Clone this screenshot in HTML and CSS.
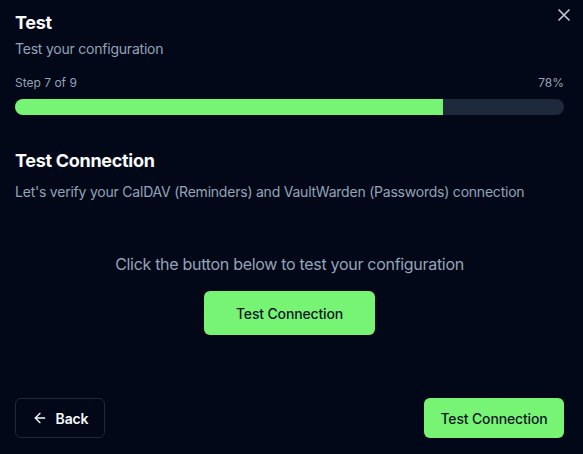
FILE: index.html
```html
<!DOCTYPE html>
<html>
<head>
<meta charset="utf-8">
<link rel="stylesheet" href="styles.css">
</head>
<body>
<div class="dialog">
  <button class="close" aria-label="Close">
    <svg width="20" height="20" viewBox="0 0 24 24" fill="none" stroke="currentColor" stroke-width="2" stroke-linecap="round"><path d="M18 6 6 18M6 6l12 12"/></svg>
  </button>
  <header class="head">
    <h1 class="title">Test</h1>
    <p class="subtitle">Test your configuration</p>
  </header>
  <div class="progress-info">
    <span>Step 7 of 9</span>
    <span>78%</span>
  </div>
  <div class="track"><div class="fill" style="width:78%"></div></div>
  <section class="step">
    <h2 class="step-title">Test Connection</h2>
    <p class="step-desc">Let's verify your CalDAV (Reminders) and VaultWarden (Passwords) connection</p>
    <div class="center">
      <p class="hint">Click the button below to test your configuration</p>
      <button class="btn primary big">Test Connection</button>
    </div>
  </section>
  <footer class="foot">
    <button class="btn outline">
      <svg width="16" height="16" viewBox="0 0 24 24" fill="none" stroke="currentColor" stroke-width="2" stroke-linecap="round" stroke-linejoin="round"><path d="m12 19-7-7 7-7"/><path d="M19 12H5"/></svg>
      Back
    </button>
    <button class="btn primary">Test Connection</button>
  </footer>
</div>
</body>
</html>
```
FILE: styles.css
```css
* { box-sizing: border-box; }
html, body { margin: 0; padding: 0; }
body {
  background: #020817;
  font-family: Inter, "Noto Sans", sans-serif;
  color: #f8fafc;
  width: 583px;
  height: 454px;
  overflow: hidden;
  letter-spacing: -0.22px;
}
.dialog {
  position: relative;
  padding: 12px 19px 16px 15px;
  height: 454px;
  display: flex;
  flex-direction: column;
}
.close {
  position: absolute;
  top: 5px;
  right: 9px;
  background: none;
  border: 0;
  padding: 0;
  color: #c3c9d3;
  display: flex;
}
.title {
  margin: 0;
  font-size: 18px;
  font-weight: 700;
  line-height: 22px;
  letter-spacing: -0.3px;
}
.subtitle {
  margin: 5px 0 0;
  font-size: 14px;
  line-height: 20px;
  color: #94a3b8;
}
.progress-info {
  margin-top: 16px;
  display: flex;
  justify-content: space-between;
  font-size: 12px;
  line-height: 16px;
  color: #94a3b8;
  letter-spacing: 0;
}
.track {
  margin-top: 8px;
  height: 16px;
  border-radius: 8px;
  background: #1e293b;
  overflow: hidden;
}
.fill {
  height: 100%;
  background: #77f473;
}
.step-title {
  margin: 34px 0 0;
  font-size: 18px;
  font-weight: 700;
  line-height: 24px;
  letter-spacing: -0.3px;
}
.step-desc {
  margin: 9px 0 0;
  font-size: 14px;
  line-height: 20px;
  color: #94a3b8;
}
.center {
  margin-top: 50px;
  display: flex;
  flex-direction: column;
  align-items: center;
}
.hint {
  margin: 0;
  font-size: 16px;
  line-height: 24px;
  color: #94a3b8;
  letter-spacing: -0.3px;
}
.btn {
  font-family: inherit;
  font-size: 14px;
  letter-spacing: -0.15px;
  border-radius: 6px;
  display: flex;
  align-items: center;
  justify-content: center;
  cursor: pointer;
}
.primary {
  background: #77f473;
  border: 0;
  color: #0f172a;
  font-weight: 500;
}
.big {
  margin-top: 15px;
  width: 171px;
  height: 44px;
}
.foot {
  margin-top: auto;
  display: flex;
  justify-content: space-between;
}
.outline {
  background: transparent;
  border: 1px solid #1e293b;
  color: #f8fafc;
  font-weight: 600;
  gap: 8px;
  width: 90px;
  height: 40px;
}
.foot .primary {
  width: 140px;
  height: 40px;
}
```
